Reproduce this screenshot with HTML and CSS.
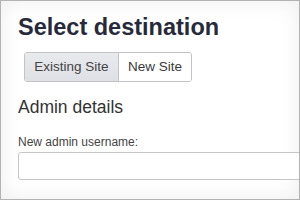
FILE: index.html
```html
<!DOCTYPE html>
<html>
<head>
<meta charset="utf-8">
<link rel="stylesheet" href="styles.css">
</head>
<body>
<div class="frame">
  <h1 class="title">Select destination</h1>
  <div class="seg">
    <button class="seg-btn active">Existing Site</button>
    <button class="seg-btn">New Site</button>
  </div>
  <h2 class="section">Admin details</h2>
  <label class="label" for="u">New admin username:</label>
  <input class="field" id="u" type="text">
</div>
</body>
</html>
```
FILE: styles.css
```css
html, body {
  margin: 0;
  padding: 0;
  background: #fff;
}
.frame {
  width: 300px;
  height: 200px;
  box-sizing: border-box;
  border: 1px solid #b3b3b3;
  overflow: hidden;
  padding: 12px 0 0 17px;
  font-family: "Liberation Sans", Arial, sans-serif;
  background: #fff;
  box-shadow: inset 0 0 22px rgba(0, 0, 0, 0.07);
}
.title {
  margin: 0;
  font-size: 23.5px;
  line-height: 28px;
  font-weight: bold;
  color: #272a3b;
  white-space: nowrap;
}
.seg {
  display: flex;
  margin: 11px 0 0 6px;
  width: max-content;
  border: 1px solid #c3c3c6;
  border-radius: 3px;
  overflow: hidden;
}
.seg-btn {
  font-family: inherit;
  font-size: 13.5px;
  line-height: 18px;
  padding: 5px 0;
  margin: 0;
  border: 0;
  background: #fff;
  color: #3a3a3a;
  text-align: center;
}
.seg-btn:first-child {
  width: 94px;
  border-right: 1px solid #c3c3c6;
}
.seg-btn:last-child {
  width: 72px;
}
.seg-btn.active {
  background: linear-gradient(#e9eaee, #dfe0e5);
  color: #444;
}
.section {
  margin: 14px 0 0 0;
  font-size: 17.5px;
  line-height: 22px;
  font-weight: normal;
  color: #333;
}
.label {
  display: block;
  margin-top: 16px;
  font-size: 12px;
  line-height: 16px;
  color: #444;
}
.field {
  display: block;
  margin-top: 2px;
  box-sizing: border-box;
  width: 320px;
  height: 28px;
  border: 1px solid #c6c6c6;
  border-radius: 3px;
  background: #fff;
  padding: 0 6px;
}
```
